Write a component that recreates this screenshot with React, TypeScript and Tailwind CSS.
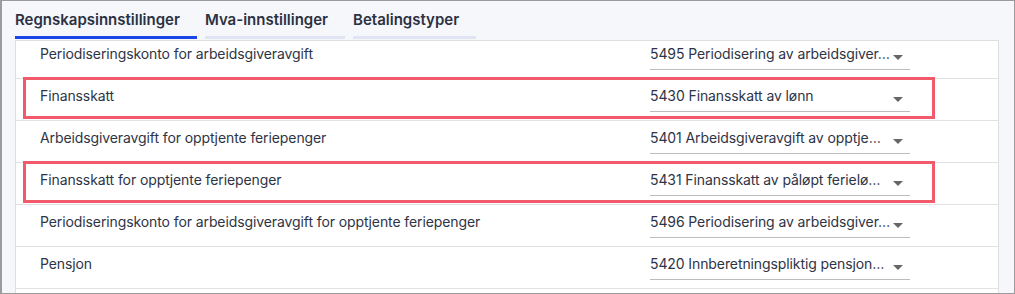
const tabs = [
  { label: "Regnskapsinnstillinger", active: true },
  { label: "Mva-innstillinger", active: false },
  { label: "Betalingstyper", active: false },
];

// values are shown cut, as the select does in the reference
const rows = [
  { label: "Periodiseringskonto for arbeidsgiveravgift", value: "5495 Periodisering av arbeidsgiver…", mark: false },
  { label: "Finansskatt", value: "5430 Finansskatt av lønn", mark: true },
  { label: "Arbeidsgiveravgift for opptjente feriepenger", value: "5401 Arbeidsgiveravgift av opptje…", mark: false },
  { label: "Finansskatt for opptjente feriepenger", value: "5431 Finansskatt av påløpt ferielø…", mark: true },
  { label: "Periodiseringskonto for arbeidsgiveravgift for opptjente feriepenger", value: "5496 Periodisering av arbeidsgiver…", mark: false },
  { label: "Pensjon", value: "5420 Innberetningspliktig pensjon…", mark: false },
];

const Select = ({ value }: { value: string }) => (
  <div className="flex h-[33px] w-[260px] items-start border-b border-[#bcbcbc] pt-[8px]">
    <span className="whitespace-nowrap text-[14px] leading-[18px] tracking-[-0.1px] text-[#2e3446]">{value}</span>
    <span className="ml-auto mr-[7px] mt-[10px] h-0 w-0 shrink-0 border-l-[5px] border-r-[5px] border-t-[5px] border-l-transparent border-r-transparent border-t-[#666666]" />
  </div>
);

export default function App() {
  return (
    <div
      className="flex h-[294px] w-[1015px] flex-col overflow-hidden border border-l-2 border-[#9b9b9b] bg-[#f6f7fb]"
      style={{ fontFamily: "Inter, 'Noto Sans', sans-serif" }}
    >
      <div className="flex h-[39px] shrink-0 gap-[8px] pl-[13px]">
        {tabs.map((t) => (
          <div
            key={t.label}
            className={`h-[38px] border-b-[3px] pr-[17px] pt-[9px] text-[15px] font-semibold leading-[20px] text-[#2b3142] ${
              t.active ? "border-[#1a46e6]" : "border-[#e1e5f3]"
            }`}
          >
            {t.label}
          </div>
        ))}
      </div>
      <div className="ml-[13px] w-[984px] flex-1 overflow-hidden border-x border-t border-[#dedede] bg-white">
        <div className="-mt-[4px]">
          {rows.map((r, i) => (
            <div
              key={i}
              className="relative grid h-[42px] grid-cols-[610px_260px] border-b border-[#e2e2e2] pl-[24px]"
            >
              <div className="pt-[8px] text-[14px] leading-[18px] tracking-[-0.1px] text-[#2e3446]">{r.label}</div>
              <Select value={r.value} />
              {r.mark && (
                <div className="pointer-events-none absolute left-[7px] top-[-2px] h-[42px] w-[912px] border-[3px] border-[#f05a6b]" />
              )}
            </div>
          ))}
          {/* next row is scrolled out of view */}
          <div className="h-[42px]" />
        </div>
      </div>
    </div>
  );
}
